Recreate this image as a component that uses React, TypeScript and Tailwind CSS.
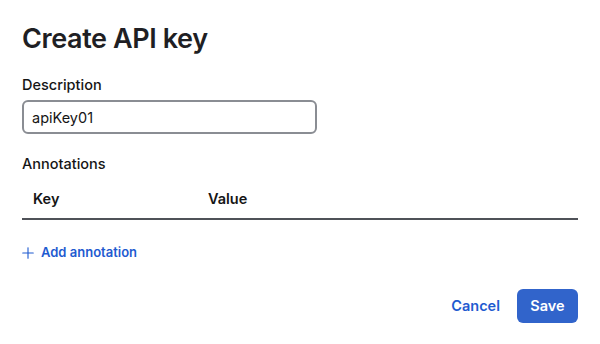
import { Plus } from "lucide-react";

export default function App() {
  return (
    <div className="h-[344px] w-[600px] bg-white px-[22px] pt-[21px] font-['Inter',sans-serif] text-[#151515]">
      <h1 className="text-[27px] font-semibold leading-[36px] tracking-[-0.4px] text-[#1f1f24]">
        Create API key
      </h1>

      <form className="mt-[18px] flex flex-col">
        <label htmlFor="desc" className="text-[14.5px] font-medium leading-[20px]">
          Description
        </label>
        <input
          id="desc"
          defaultValue="apiKey01"
          className="mt-[5px] h-[34px] w-[295px] rounded-[6px] border-2 border-[#8a8d93] px-[8px] text-[14.5px] outline-none"
        />

        <div className="mt-[20px] text-[14.5px] font-medium leading-[20px]">Annotations</div>

        <div className="mt-[14px] flex h-[32px] items-start border-b-2 border-[#4f5258] text-[14.5px] font-semibold">
          <div className="w-[186px] pl-[11px]">Key</div>
          <div>Value</div>
        </div>

        <button
          type="button"
          className="mt-[23px] flex w-fit items-center gap-[4px] text-[13px] font-semibold text-[#1f5bd0]"
        >
          <Plus size={18} strokeWidth={1.5} className="-ml-[3px]" />
          Add annotation
        </button>

        <div className="mt-[26px] flex items-center justify-end gap-[17px]">
          <button type="button" className="text-[14.5px] font-semibold text-[#1f5bd0]">
            Cancel
          </button>
          <button
            type="submit"
            className="h-[34px] w-[61px] rounded-[6px] bg-[#3164cb] text-[14.5px] font-semibold text-white"
          >
            Save
          </button>
        </div>
      </form>
    </div>
  );
}
